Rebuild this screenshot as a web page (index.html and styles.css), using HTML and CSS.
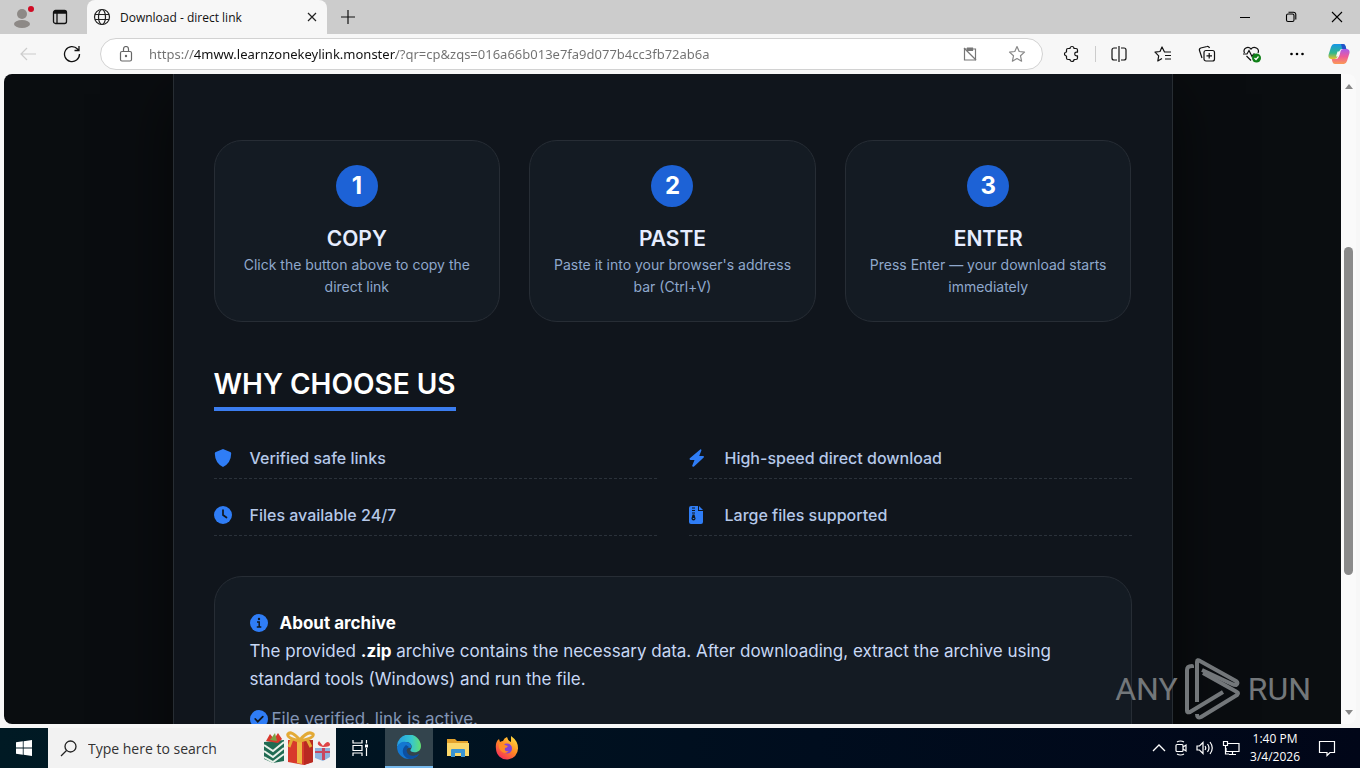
FILE: index.html
```
<!DOCTYPE html>
<html lang="en">
<head>
  <meta charset="UTF-8">
  <title>Download - direct link</title>
  <link rel="stylesheet" href="styles.css">
</head>
<body>
  <header class="tabstrip">
    <button class="profile" aria-label="Profile">
      <svg width="24" height="24" viewBox="0 0 24 24"><circle cx="11" cy="9" r="5" fill="#8d8986"/><ellipse cx="11" cy="19" rx="8" ry="4" fill="#8d8986"/><circle cx="20" cy="4" r="3" fill="#d00b24"/></svg>
    </button>
    <button class="workspaces" aria-label="Tab actions">
      <svg width="16" height="16" viewBox="0 0 16 16" fill="none" stroke="#111" stroke-width="1.3"><rect x="1.5" y="1.5" width="13" height="13" rx="2"/><path d="M1.5 4h13M5 4v10" /><path d="M2 3h12" stroke-width="2"/></svg>
    </button>
    <div class="tab">
      <svg width="18" height="18" viewBox="0 0 18 18" fill="none" stroke="#222" stroke-width="1.2"><circle cx="9" cy="9" r="7.5"/><ellipse cx="9" cy="9" rx="3.5" ry="7.5"/><path d="M2 6.5h14M2 11.5h14"/></svg>
      <span class="tab-title">Download - direct link</span>
      <button aria-label="Close tab">
        <svg width="10" height="10" viewBox="0 0 10 10" stroke="#222" stroke-width="1.2"><path d="M1 1l8 8M9 1L1 9"/></svg>
      </button>
    </div>
    <button class="new-tab" aria-label="New tab">
      <svg width="14" height="14" viewBox="0 0 14 14" stroke="#111" stroke-width="1.2"><path d="M7 0v14M0 7h14"/></svg>
    </button>
    <div class="window-buttons">
      <button aria-label="Minimize"><svg width="12" height="12" viewBox="0 0 12 12" stroke="#000"><path d="M1 6.500h10"/></svg></button>
      <button aria-label="Restore"><svg width="12" height="12" viewBox="0 0 12 12" fill="none" stroke="#000" stroke-width="1.1"><rect x="1.500" y="3" width="7.500" height="7.500" rx="1.500"/><path d="M3.500 1.200h5a2.300 2.300 0 0 1 2.300 2.300v5"/></svg></button>
      <button aria-label="Close"><svg width="12" height="12" viewBox="0 0 12 12" stroke="#000" stroke-width="1.1"><path d="M1 1l10 10M11 1L1 11"/></svg></button>
    </div>
  </header>

  <nav class="toolbar">
    <button aria-label="Back"><svg width="18" height="18" viewBox="0 0 18 18" fill="none" stroke="#ccc" stroke-width="1.200"><path d="M17 9H2M8 3L2 9l6 6"/></svg></button>
    <button aria-label="Refresh"><svg width="18" height="18" viewBox="0 0 18 18" fill="none" stroke="#111" stroke-width="1.300"><path d="M16.500 9A7.500 7.500 0 1 1 14.500 4l1.500 1.500M16 1v4.500h-4.500"/></svg></button>
    <div class="address">
      <svg width="14" height="16" viewBox="0 0 14 16" fill="none" stroke="#666" stroke-width="1.200"><rect x="1.500" y="5.500" width="11" height="9.500" rx="1.500"/><path d="M4.500 5.500V3a2.500 2.500 0 0 1 5 0v2.500"/><circle cx="7" cy="10" r=".6" fill="#666"/></svg>
      <input type="text" aria-label="Address" value="https://4mww.learnzonekeylink.monster/?qr=cp&amp;zqs=016a66b013e7fa9d077b4cc3fb72ab6a">
      <button aria-label="Clipboard blocked"><svg width="14" height="14" viewBox="0 0 14 14" fill="none" stroke="#777" stroke-width="1.200"><path d="M4.500 2H1.500v11h11V2H9.500"/><path d="M4.500 1h5v2.500h-5z" fill="#777"/><path d="M1 1l12 12"/></svg></button>
      <button aria-label="Favorite"><svg width="18" height="18" viewBox="0 0 18 18" fill="none" stroke="#888" stroke-width="1.200" stroke-linejoin="round"><path d="M9 1.500l2.200 5 5.300.6-4 3.700 1.100 5.400L9 13.500l-4.600 2.700 1.100-5.400-4-3.700 5.300-.6z"/></svg></button>
    </div>
    <div class="tools">
      <button aria-label="Extensions"><svg width="18" height="18" viewBox="0 0 18 18" fill="none" stroke="#111" stroke-width="1.200" stroke-linejoin="round"><path d="M5 3.500h2a2 2 0 0 1 4 0h2q1.500 0 1.500 1.500v2.200h-1a1.800 1.800 0 1 0 0 3.600h1V13q0 1.500-1.500 1.500h-2a2 2 0 0 1-4 0H5q-1.500 0-1.500-1.500v-2a2 2 0 0 1 0-4V5q0-1.500 1.500-1.500z"/></svg></button>
      <i class="divider"></i>
      <button aria-label="Split screen"><svg width="18" height="18" viewBox="0 0 18 18" fill="none" stroke="#111" stroke-width="1.200"><path d="M7 3H4a2 2 0 0 0-2 2v8a2 2 0 0 0 2 2h3M9 1v16M11 3h3a2 2 0 0 1 2 2v8a2 2 0 0 1-2 2h-3"/></svg></button>
      <button aria-label="Favorites"><svg width="18" height="18" viewBox="0 0 18 18" fill="none" stroke="#111" stroke-width="1.200" stroke-linejoin="round"><path d="M17 7h-6.500L8 2 6 6.500 1 7.200l3.700 3.700-.9 5.100L8 13.500M11 10.500h6M11 14h6"/></svg></button>
      <button aria-label="Collections"><svg width="18" height="18" viewBox="0 0 18 18" fill="none" stroke="#111" stroke-width="1.200"><path d="M4 13L1.500 5.500a2 2 0 0 1 1.300-2.500L9 1.500a2 2 0 0 1 2.500 1.500"/><rect x="6" y="5.500" width="10.500" height="10.500" rx="2"/><path d="M11.200 8v5.500M8.500 10.800H14"/></svg></button>
      <button aria-label="Browser essentials"><svg width="20" height="18" viewBox="0 0 20 18" fill="none" stroke="#111" stroke-width="1.200"><path d="M2.500 8C.5 3.500 6 .5 9 4c3-3.500 9-.5 7 4M4.500 11L9 15.500"/><path d="M1 9h4l2-3.500 3 6L11.500 9H13"/><circle cx="14.500" cy="13" r="4.500" fill="#108018" stroke="none"/><path d="M12.500 13l1.500 1.500 2.500-3" stroke="#fff"/></svg></button>
      <button aria-label="Settings and more"><svg width="18" height="18" viewBox="0 0 18 18"><circle cx="3.500" cy="9" r="1.300"/><circle cx="9" cy="9" r="1.300"/><circle cx="14.500" cy="9" r="1.300"/></svg></button>
      <button class="copilot" aria-label="Copilot"><svg width="22" height="20" viewBox="0 0 22 20">
        <defs>
          <linearGradient id="copA" x2="0" y2="1"><stop stop-color="#1696e8"/><stop offset=".6" stop-color="#31b78b"/><stop offset="1" stop-color="#e9c22b"/></linearGradient>
          <linearGradient id="copB" x2="0" y2="1"><stop stop-color="#a85bea"/><stop offset=".5" stop-color="#ee5a9a"/><stop offset="1" stop-color="#fb9a55"/></linearGradient>
        </defs>
        <path d="M6 0h9q2 0 2.500 2l.8 3H14q-2 0-2.700 2.200L9.500 13Q8.700 15 6.500 15H3q-3-.5-2.500-4L3 3Q4 0 6 0z" fill="url(#copA)"/>
        <path d="M13 0h2q2 0 2.500 2l.8 3h-4z" fill="#2452c8"/>
        <path d="M16 20H7q-2 0-2.500-2l-.8-3H8q2 0 2.700-2.200L12.500 7Q13.300 5 15.500 5H19q3 .5 2.500 4L19 17q-1 3-3 3z" fill="url(#copB)"/>
        <path d="M9.500 7.500h3l-1.500 5H8z" fill="#f7f7f7"/></svg></button>
    </div>
  </nav>

  <div class="viewport">
    <div class="page">
      <main class="panel">
        <section class="steps">
          <div class="step">
            <span class="step-number">1</span>
            <h3>COPY</h3>
            <p>Click the button above to copy the direct link</p>
          </div>
          <div class="step">
            <span class="step-number">2</span>
            <h3>PASTE</h3>
            <p>Paste it into your browser's address bar (Ctrl+V)</p>
          </div>
          <div class="step">
            <span class="step-number">3</span>
            <h3>ENTER</h3>
            <p>Press Enter — your download starts immediately</p>
          </div>
        </section>

        <h2>WHY CHOOSE US</h2>
        <ul class="features">
          <li><svg class="icon" viewBox="0 0 18 18"><path d="M9 0l7.200 3q1 .4 1 1.500Q17 14 9 18 1 14 .8 4.500.8 3.400 1.800 3z"/></svg>Verified safe links</li>
          <li><svg class="icon" viewBox="0 0 18 18"><path d="M11.500.2q1.200.3.800 1.600L10.200 7h4q1.200.4.500 1.600L5 17.500q-1.600 1-1.800-.8L5.500 11h-4Q0 10.500.8 9.300z"/></svg>High-speed direct download</li>
          <li><svg class="icon" viewBox="0 0 18 18"><circle cx="9" cy="9" r="9"/><path d="M9 4v5l3.500 2.500" fill="none" stroke="#11171d" stroke-width="1.700" stroke-linecap="round"/></svg>Files available 24/7</li>
          <li><svg class="icon" viewBox="0 0 18 18"><path d="M2 0h7v5h5v11q0 2-2 2H2q-2 0-2-2V2Q0 0 2 0z"/><path d="M10 0l4 4h-4z"/><path d="M3 2h3M3 4.500h3M3 7h3" stroke="#11171d"/><path d="M3.500 8.500h2l1 4a2 2 0 0 1-4 0z" fill="#11171d"/><path d="M3.800 12.500h1.500" stroke="#2f7df6"/></svg>Large files supported</li>
        </ul>

        <section class="about">
          <h4><svg class="icon" viewBox="0 0 18 18"><circle cx="9" cy="9" r="9"/><path d="M7 8h2.200v5M6.800 13h4.500" fill="none" stroke="#11171d" stroke-width="1.500"/><circle cx="9" cy="5" r="1.200" fill="#11171d"/></svg>About archive</h4>
          <p>The provided <strong>.zip</strong> archive contains the necessary data. After downloading, extract the archive using standard tools (Windows) and run the file.</p>
          <p class="verified"><svg class="icon" viewBox="0 0 18 18"><circle cx="9" cy="9" r="9"/><path d="M5.300 9l2.500 2.700 5-5" fill="none" stroke="#11171d" stroke-width="1.800" stroke-linecap="round"/></svg>File verified, link is active.</p>
        </section>
      </main>
    </div>
    <div class="scrollbar">
      <span class="arrow-up"></span>
      <span class="thumb"></span>
      <span class="arrow-down"></span>
    </div>
    <div class="watermark">
      <span>ANY</span>
      <svg width="56" height="62" viewBox="0 0 56 62" fill="none" stroke="#73777a" stroke-width="4" stroke-linejoin="round"><path d="M7 10V8q-5 0-5 4v41q0 2 3 1l33-20"/><path d="M12 44V4q0-3 3-1l36 20q3 2 0 4-2 0-4-1L17 12"/><path d="M12 56q0 5 4 3l36-22q2-2 0-3L18 15"/></svg>
      <span>RUN</span>
    </div>
  </div>

  <footer class="taskbar">
    <button class="start" aria-label="Start"><svg width="16" height="16" viewBox="0 0 16 16" fill="#fff"><path d="M0 2.200L6.800 1.300v6.300H0zM7.600 1.200L16 0v7.600H7.600zM0 8.400h6.800v6.300L0 13.800zM7.600 8.400H16V16l-8.400-1.200z"/></svg></button>
    <div class="search">
      <svg width="17" height="17" viewBox="0 0 17 17" fill="none" stroke="#222" stroke-width="1.300"><circle cx="10.500" cy="6.500" r="5.500"/><path d="M6.500 10.500L1 16"/></svg>
      <input type="text" aria-label="Search" placeholder="Type here to search">
      <svg width="68" height="34" viewBox="0 0 68 34">
        <path d="M0 11l20-2v21L9 32 0 28z" fill="#1f6b52"/>
        <path d="M0 14l9 6 11-9M0 20l9 6 11-9M0 26l9 5 11-8" fill="none" stroke="#e8f1e9" stroke-width="2"/>
        <path d="M2 10l4-7 4 5 4-6 4 6-4 4z" fill="#d8382c"/><path d="M6 9l5-7 2 8z" fill="#7ca044"/>
        <path d="M24 9h25v22l-9 3-16-3z" fill="#d83a2c"/><path d="M40 9h9v22l-9 3z" fill="#b92a22"/>
        <path d="M33 9h5v24l-5-1z" fill="#edb743"/><path d="M36 9Q27-1 24 3q-2 4 12 7M36 9q8-10 13-6 2 4-13 7M28 8l-3 8M43 8l4 8" fill="none" stroke="#e3aa36" stroke-width="3"/>
        <path d="M51 17h15v9l-7 4-8-3z" fill="#8eb3de"/><path d="M58 17h3v12h-3zM51 20h15v2H51z" fill="#c74760"/><path d="M59 16q-8-2-4-6l4 5q5-7 7-2 1 3-7 3z" fill="#df4346"/>
      </svg>
    </div>
    <button class="app" aria-label="Task view"><svg width="18" height="18" viewBox="0 0 18 18" fill="none" stroke="#fff" stroke-width="1.200"><path d="M2 1v3h9V1M2 17v-3h9v3M2 6.500h9v5H2zM15.500 1v3.500M15.500 9v8"/><path d="M14 5.500h3v3h-3z" fill="#fff" stroke="none"/></svg></button>
    <button class="app active" aria-label="Edge"><svg width="24" height="24" viewBox="0 0 24 24">
      <defs><linearGradient id="edgeTop"><stop stop-color="#249de4"/><stop offset=".6" stop-color="#36c6cf"/><stop offset="1" stop-color="#62df70"/></linearGradient></defs>
      <path d="M0 12a12 12 0 0 1 24-1c0 5-4 7-8 6-3-.5-3-2-2-3 2-4-1-7-5-7Q3 7 0 12z" fill="url(#edgeTop)"/>
      <path d="M0 12Q3 6 9 7c4 0 6 3 5 6-3-1-6 1-5 5 1 4 7 5 13 1-3 4-7 5-10 5A12 12 0 0 1 0 12z" fill="#1377d1"/>
      <path d="M9 10q-4 3-3 8 1 4 6 6c4 0 8-1 10-5-6 3-11 2-12-2-1-2 0-4 2-5z" fill="#0c4fa0"/></svg></button>
    <button class="app" aria-label="File Explorer"><svg width="22" height="20" viewBox="0 0 22 20"><path d="M0 1h8l2 2h11v4H0z" fill="#e3a22c"/><path d="M0 5h22v13H0z" fill="#fbd86b"/><path d="M4 19v-7q0-1 1-1h12q1 0 1 1v7h-4v-4H8v4z" fill="#3a94d3"/></svg></button>
    <button class="app" aria-label="Firefox"><svg width="24" height="24" viewBox="0 0 24 24">
      <defs><linearGradient id="fox" x1=".9" x2=".2" y2="1"><stop stop-color="#ffe743"/><stop offset=".5" stop-color="#ff8a22"/><stop offset="1" stop-color="#f5255f"/></linearGradient></defs>
      <path d="M1 13Q0 6 4 3l1 3q2-1 3-1 1-3 4-4 1 4 4 5V0q7 5 7 12a11 11 0 0 1-22 1z" fill="url(#fox)"/><circle cx="12" cy="12.500" r="5" fill="#8343d6"/><path d="M4 8q4-2 6 1l3 1q-1 2-3 2-1 4 4 3-4 4-8 0-3-3-2-7z" fill="#ff8b25"/></svg></button>
    <div class="tray">
      <svg width="14" height="14" viewBox="0 0 14 14" fill="none" stroke="#fff" stroke-width="1.300"><path d="M1 10l6-6 6 6"/></svg>
      <svg width="14" height="16" viewBox="0 0 14 16" fill="none" stroke="#fff" stroke-width="1.200"><rect x="2" y="4.500" width="7" height="7" rx="1"/><path d="M9 7l3-2v6L9 9M3 2q3.500-2 7 0M3 14q3.500 2 7 0"/></svg>
      <svg width="18" height="16" viewBox="0 0 18 16" fill="none" stroke="#fff" stroke-width="1.200"><path d="M1 6h2.500L7 2.500v11L3.500 10H1zM9 6q1.500 2 0 4M11.500 4q3 4 0 8M14 2q4.500 6 0 12"/></svg>
      <svg width="18" height="16" viewBox="0 0 18 16" fill="none" stroke="#fff" stroke-width="1.200"><path d="M6 3.500h11v8H4V8M10.500 11.500v3M7 14.500h7"/><path d="M1.500 1.500h4v4h-4zM3.500 5.500V14H7"/></svg>
      <div class="clock"><span>1:40 PM</span><span>3/4/2026</span></div>
      <button aria-label="Notifications"><svg width="18" height="18" viewBox="0 0 18 18" fill="none" stroke="#fff" stroke-width="1.200"><path d="M1.500 2.500h15v11H12l-3 3v-3H1.500z"/></svg></button>
    </div>
  </footer>
</body>
</html>
```

FILE: styles.css
```
* {
  box-sizing: border-box;
}

body {
  margin: 0;
  height: 100vh;
  display: flex;
  flex-direction: column;
  overflow: hidden;
  background: #f7f7f7;
  font-family: "Open Sans", sans-serif;
  font-size: 12px;
  color: #111;
}

h2, h3, h4, p, ul {
  margin: 0;
  padding: 0;
}

button {
  display: flex;
  align-items: center;
  justify-content: center;
  padding: 0;
  border: none;
  background: none;
  cursor: pointer;
}

input {
  border: none;
  outline: none;
  padding: 0;
  font-family: inherit;
  background: none;
}

svg {
  flex-shrink: 0;
}

/* browser tabs */
.tabstrip {
  display: flex;
  height: 34px;
  flex-shrink: 0;
  background: #ccc;
}

.profile {
  width: 46px;
}

.workspaces {
  width: 28px;
}

.tab {
  display: flex;
  align-items: center;
  gap: 9px;
  width: 240px;
  margin-left: 13px;
  padding: 0 10px 0 6px;
  border-radius: 8px 8px 0 0;
  background: #f7f7f7;
}

.tab-title {
  flex: 1;
}

.new-tab {
  width: 42px;
}

.window-buttons {
  display: flex;
  margin-left: auto;
}

.window-buttons button {
  width: 46px;
}

/* address bar */
.toolbar {
  display: flex;
  align-items: center;
  height: 40px;
  flex-shrink: 0;
  padding: 0 10px 0 6px;
}

.toolbar > button {
  width: 44px;
}

.address {
  flex: 1;
  display: flex;
  align-items: center;
  height: 32px;
  margin-left: 6px;
  padding: 0 16px 0 18px;
  border: 1px solid #d2d2d2;
  border-radius: 16px;
  background: #fff;
}

/* the host part of the address is darker than the rest */
.address input {
  flex: 1;
  margin-left: 16px;
  font-family: "Noto Sans", sans-serif;
  font-size: 13px;
  color: transparent;
  background: linear-gradient(90deg, #707070 44px, #111 44px, #111 247px, #707070 247px);
  background-clip: text;
  -webkit-background-clip: text;
}

.address button {
  margin-left: 31px;
}

.tools {
  display: flex;
  align-items: center;
  gap: 26px;
  margin-left: 20px;
}

.divider {
  width: 1px;
  height: 16px;
  margin: 0 -12px;
  background: #ccc;
}

.copilot {
  margin-left: -4px;
}

/* web page */
.viewport {
  position: relative;
  flex: 1;
  min-height: 0;
  display: flex;
  margin: 0 4px 4px;
  border-radius: 8px;
  overflow: hidden;
  background: #fafafa;
}

.page {
  flex: 1;
  overflow: hidden;
  background: #0a0d10;
  font-family: Inter, sans-serif;
  line-height: 28px;
}

.panel {
  max-width: 1000px;
  margin: 0 auto;
  padding: 66px 40px 40px;
  border: 1px solid #272d33;
  border-top: none;
  background: #10151c;
  box-shadow: 0 20px 60px rgba(0, 0, 0, 0.6);
}

.steps {
  display: grid;
  grid-template-columns: repeat(3, 1fr);
  gap: 29px;
}

.step {
  display: flex;
  flex-direction: column;
  align-items: center;
  padding: 24px 20px 23px;
  border: 1px solid #272d35;
  border-radius: 28px;
  background: #141b23;
  text-align: center;
}

.step-number {
  width: 42px;
  height: 42px;
  margin-bottom: 16px;
  border-radius: 50%;
  background: #1d62d6;
  color: #fff;
  font-size: 24px;
  font-weight: 700;
  line-height: 42px;
}

.step h3 {
  font-size: 21px;
  font-weight: 600;
  line-height: 31px;
  color: #e6edff;
}

.step p {
  font-size: 14px;
  line-height: 22px;
  color: #8fa8cc;
}

.panel h2 {
  width: fit-content;
  margin-top: 42px;
  padding-bottom: 3px;
  border-bottom: 4px solid #3b7df0;
  font-size: 28px;
  font-weight: 600;
  line-height: 40px;
  color: #fff;
}

.features {
  display: grid;
  grid-template-columns: 1fr 1fr;
  gap: 15px 32px;
  margin-top: 26px;
  list-style: none;
}

.features li {
  display: flex;
  align-items: center;
  gap: 18px;
  padding: 8px 0 7px;
  border-bottom: 1px dashed #2a313a;
  font-size: 16px;
  font-weight: 500;
  line-height: 26px;
  color: #b5c8e8;
}

.icon {
  width: 18px;
  height: 18px;
  fill: #2f7df6;
}

.about {
  margin-top: 40px;
  padding: 32px 35px;
  border: 1px solid #272d35;
  border-radius: 28px;
  background: #141b23;
  font-size: 17px;
  color: #c8d8f5;
}

.about h4 {
  display: flex;
  align-items: center;
  gap: 12px;
  font-weight: 700;
  color: #fff;
}

.about strong {
  color: #fff;
}

.about .verified {
  display: flex;
  align-items: center;
  gap: 4px;
  margin-top: 12px;
  color: #8295b5;
}

.scrollbar {
  display: flex;
  flex-direction: column;
  align-items: center;
  width: 15px;
  padding: 10px 0 9px;
}

.arrow-up,
.arrow-down {
  border: 4px solid transparent;
}

.arrow-up {
  border-top: none;
  border-bottom: 5px solid #888;
}

.arrow-down {
  margin-top: auto;
  border-bottom: none;
  border-top: 5px solid #888;
}

.thumb {
  width: 9px;
  height: 52%;
  margin-top: 158px;
  border-radius: 5px;
  background: #8a8a8a;
}

.watermark {
  position: absolute;
  right: 45px;
  bottom: 4px;
  display: flex;
  align-items: center;
  gap: 7px;
  color: #73777a;
  font-family: Roboto, sans-serif;
  font-size: 32px;
}

/* taskbar */
.taskbar {
  display: flex;
  height: 40px;
  flex-shrink: 0;
  background: linear-gradient(90deg, #001a24, #000d1e 60%, #010618);
  color: #fff;
}

.start {
  width: 48px;
}

.search {
  display: flex;
  align-items: center;
  width: 288px;
  padding: 0 4px 0 12px;
  background: #f2f2f2;
}

.search input {
  flex: 1;
  min-width: 0;
  margin-left: 11px;
  font-size: 14px;
}

.search input::placeholder {
  color: #333;
}

.app {
  width: 48px;
  margin-right: 1px;
}

.active {
  background: #33444d;
  border-bottom: 2px solid #76b9ed;
}

.tray {
  display: flex;
  align-items: center;
  gap: 8px;
  margin-left: auto;
  padding-right: 24px;
}

.clock {
  display: flex;
  flex-direction: column;
  align-items: center;
  margin: 0 10px 0 2px;
  line-height: 18px;
}
```
